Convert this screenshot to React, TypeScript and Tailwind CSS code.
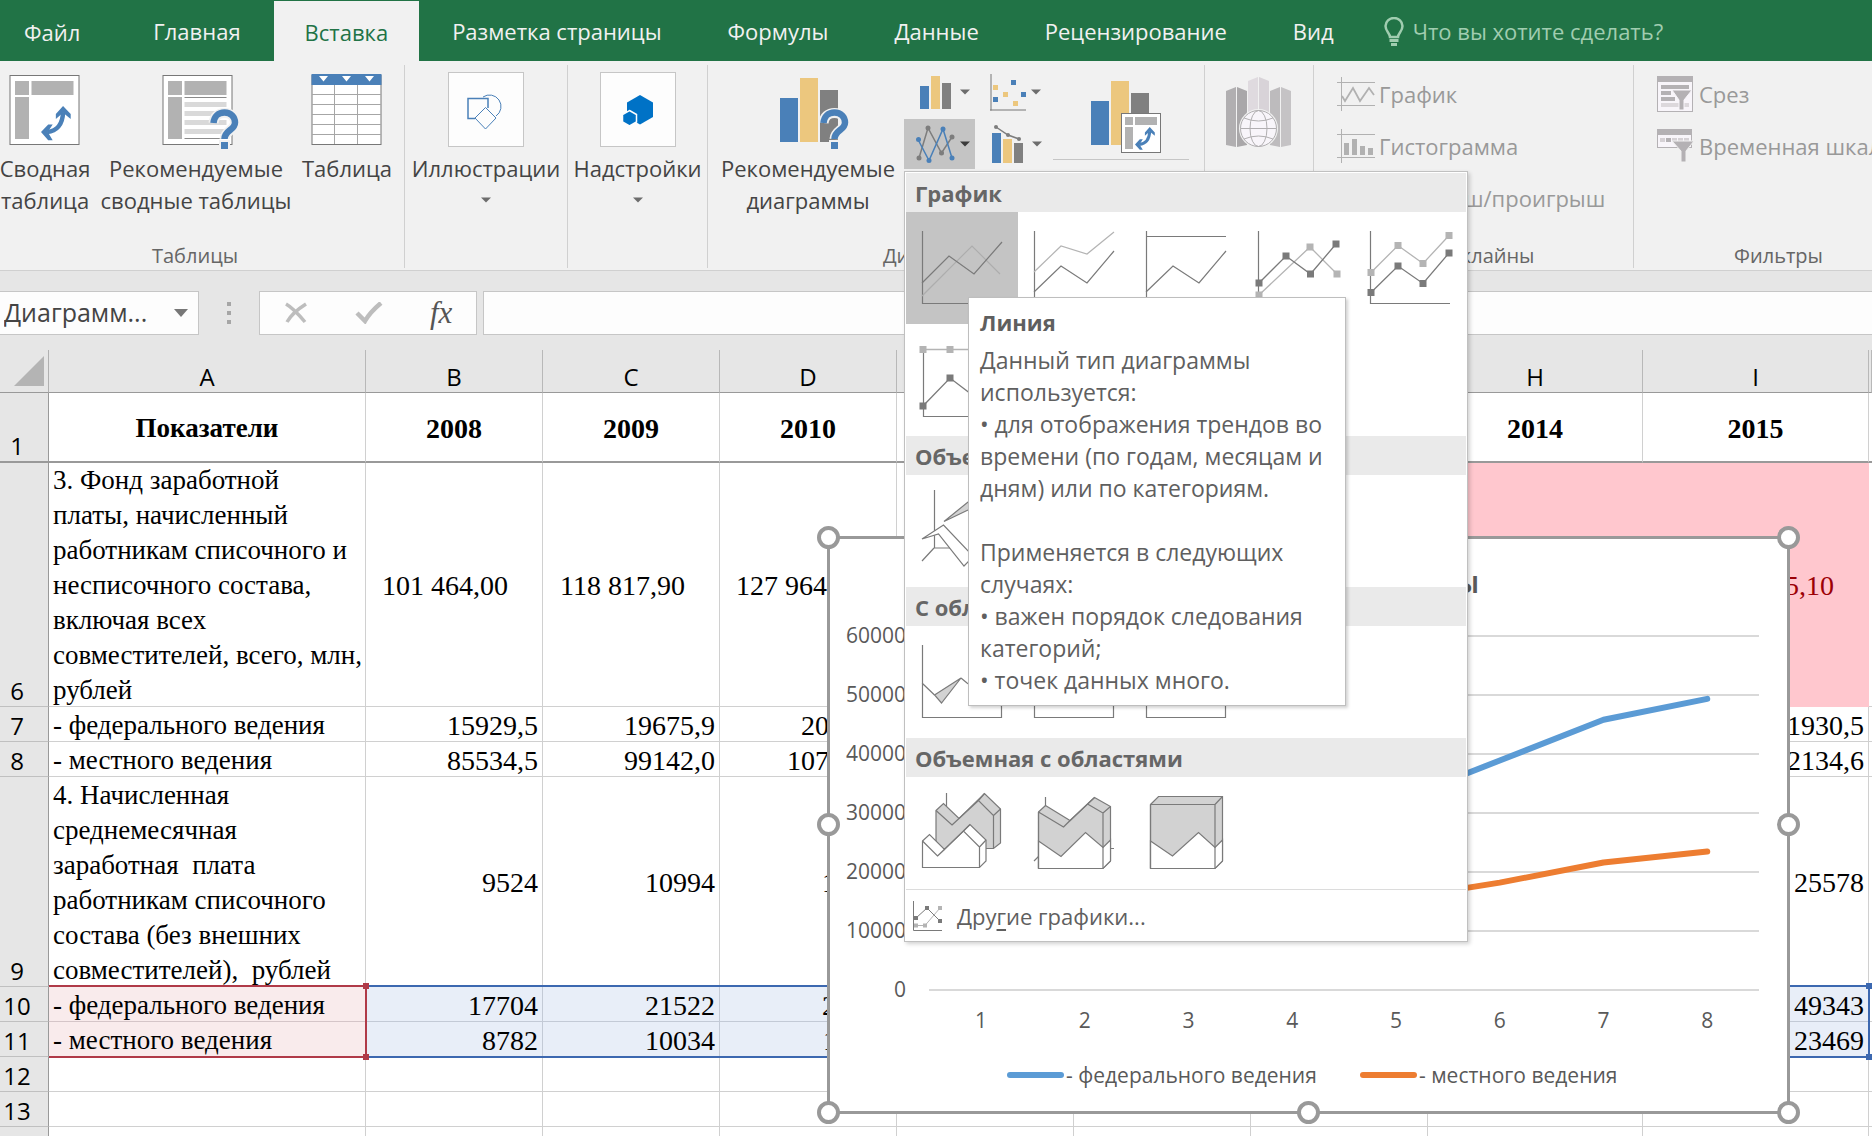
import React from 'react';

const ui = "font-['Open_Sans','Noto_Sans',sans-serif]";

const tabs = ['Главная', 'Вставка', 'Разметка страницы', 'Формулы', 'Данные', 'Рецензирование', 'Вид'];

function Caret({ dark = false }: { dark?: boolean }) {
  return (
    <svg width="10" height="6" viewBox="0 0 10 6" className="shrink-0" aria-hidden="true">
      <path d="M0 0.5H10L5 5.5Z" fill={dark ? '#3b3b3b' : '#6d6d6d'} />
    </svg>
  );
}

function SwapArrows({ x, y, s = 1 }: { x: number; y: number; s?: number }) {
  return (
    <g transform={`translate(${x} ${y}) scale(${s})`}>
      <path d="M7 29C17 28 24 21 24.500 7" fill="none" stroke="#4a80b8" strokeWidth="5" />
      <path d="M24.500 0L33 9V14.500L24.500 7.500L16.500 14.500V9Z" fill="#4a80b8" />
      <path d="M0 29L8 20.500H13L7.500 29L13 38H8Z" fill="#4a80b8" />
    </g>
  );
}

function Question({ x, y }: { x: number; y: number }) {
  return (
    <g transform={`translate(${x} ${y})`}>
      <path d="M3.500 14C4 7.500 8.500 4 14.500 4C21 4 25 8 25 13.500C25 21.500 15 21 14.500 30" fill="none" stroke="#f1f1f1" strokeWidth="10" />
      <rect x="9" y="31" width="11" height="10" fill="#f1f1f1" />
      <path d="M3.500 14C4 7.500 8.500 3.500 14.500 3.500C21 3.500 25 8 25 13.500C25 21.500 14.500 21 14.500 30" fill="none" stroke="#4a80b8" strokeWidth="6.500" />
      <rect x="11" y="33" width="7" height="7" fill="#4a80b8" />
    </g>
  );
}

function PivotIcon() {
  return (
    <svg width="72" height="78" viewBox="0 0 72 78" aria-hidden="true">
      <rect x="1" y="2.500" width="69" height="69" fill="#fff" stroke="#777" />
      <path d="M6 8H20V22H6ZM22.500 8H64.500V22H22.500ZM6 24H20V66H6Z" fill="#b2b2b2" />
      <SwapArrows x={32} y={33} s={0.9} />
    </svg>
  );
}

function RecommendedPivotIcon() {
  return (
    <svg width="78" height="78" viewBox="0 0 78 78" className="ml-2.5" aria-hidden="true">
      <rect x="1" y="2.500" width="69" height="69" fill="#fff" stroke="#777" />
      <path d="M6 8H20V22H6ZM22.500 8H64.500V22H22.500ZM6 24H20V66H6Z" fill="#b2b2b2" />
      <path d="M22.500 29H64.500V34H22.500ZM22.500 38H64.500V43H22.500ZM22.500 47H64.500V52H22.500ZM22.500 56H64.500V61H22.500Z" fill="#d9d9d9" />
      <path d="M22.500 24.500H64.500M22.500 65.500H64.500" stroke="#8a8a8a" />
      <Question x={48} y={36} />
    </svg>
  );
}

function TableIcon() {
  return (
    <svg width="72" height="78" viewBox="0 0 72 78" aria-hidden="true">
      <rect x="1" y="2.500" width="69" height="69" fill="#fff" stroke="#777" />
      <rect x="0.500" y="1" width="70" height="11" fill="#4a80b8" />
      <path d="M8 3H17L12.500 8.500ZM31 3H40L35.500 8.500ZM54 3H63L58.500 8.500Z" fill="#fff" />
      <path d="M1 21.500H70M1 31.500H70M1 41.500H70M1 51.500H70M1 61.500H70M23.500 12V71M46.500 12V71" stroke="#a6a6a6" />
    </svg>
  );
}

function ShapesIcon() {
  return (
    <svg width="38" height="38" viewBox="0 0 38 38" fill="none" stroke="#4a80b8" aria-hidden="true">
      <path d="M8 27.500H1V7.500H21V17" strokeWidth="1.500" />
      <path d="M16 6A11.500 11.500 0 1 1 29 25" />
      <path d="M18.500 16.500L29 27L18.500 38L8 27Z" />
    </svg>
  );
}

function AddinsIcon() {
  return (
    <svg width="32" height="32" viewBox="0 0 32 32" aria-hidden="true">
      <path d="M18 1L31 8.500V23L18 30.500L5 23V8.500Z" fill="#0072c6" />
      <path d="M7.500 16.500L14.500 20.500V28L7.500 32L0.500 28V20.500Z" fill="#0072c6" stroke="#fdfdfd" strokeWidth="1.500" />
    </svg>
  );
}

function RecommendedChartIcon() {
  return (
    <svg width="74" height="78" viewBox="0 0 74 78" className="ml-4" aria-hidden="true">
      <path d="M1 25H19V69H1Z" fill="#4a80b8" />
      <path d="M21 5H39V69H21Z" fill="#ecc77e" />
      <path d="M41 17H59V69H41Z" fill="#808080" />
      <Question x={41} y={36} />
    </svg>
  );
}

function ColumnIcon() {
  return (
    <svg width="32" height="36" viewBox="0 0 32 36" aria-hidden="true">
      <path d="M0 12H9V35H0Z" fill="#4a80b8" />
      <path d="M11 2H20V35H11Z" fill="#ecc77e" />
      <path d="M22 9H31V35H22Z" fill="#808080" />
    </svg>
  );
}

function ScatterIcon() {
  return (
    <svg width="37" height="37" viewBox="0 0 37 37" aria-hidden="true">
      <path d="M1 0V36.500M0 36H36" stroke="#777" fill="none" />
      <path d="M21 6H26V11H21ZM31 18H36V23H31ZM3 23H8V28H3Z" fill="#4a80b8" />
      <path d="M3 11H8V16H3ZM13 18H18V23H13ZM23 27H28V32H23Z" fill="#ecc77e" />
    </svg>
  );
}

function LineIcon() {
  return (
    <svg width="40" height="40" viewBox="0 0 40 40" fill="none" aria-hidden="true">
      <path d="M3 34L12 4L25.500 29L36 13" stroke="#7d7d7d" strokeWidth="1.500" />
      <path d="M2 15.500L13 36.500L27 5L36 34" stroke="#4a80b8" strokeWidth="1.500" />
      <g fill="#7d7d7d"><circle cx="3" cy="34" r="2.500" /><circle cx="12" cy="4" r="2.500" /><circle cx="25.500" cy="29" r="2.500" /><circle cx="36" cy="13" r="2.500" /></g>
      <g fill="#4a80b8"><circle cx="2.500" cy="15.500" r="2.500" /><circle cx="13" cy="36.500" r="2.500" /><circle cx="27" cy="5" r="2.500" /><circle cx="36" cy="34" r="2.500" /></g>
    </svg>
  );
}

function ComboIcon() {
  return (
    <svg width="32" height="40" viewBox="0 0 32 40" aria-hidden="true">
      <path d="M0 9H9V39H0Z" fill="#4a80b8" />
      <path d="M11 15H20V39H11Z" fill="#ecc77e" />
      <path d="M22 19H31V39H22Z" fill="#808080" />
      <path d="M4 3L16 11L27 15" stroke="#7d7d7d" fill="none" strokeWidth="1.500" />
      <g fill="#7d7d7d"><circle cx="4" cy="3" r="2" /><circle cx="16" cy="11" r="2" /><circle cx="27" cy="15" r="2" /></g>
    </svg>
  );
}

function PivotChartIcon() {
  return (
    <svg width="72" height="74" viewBox="0 0 72 74" aria-hidden="true">
      <path d="M0 20H18V64H0Z" fill="#4a80b8" />
      <path d="M20 0H38V64H20Z" fill="#ecc77e" />
      <path d="M40 12H58V50H40Z" fill="#808080" />
      <rect x="30.500" y="32.500" width="39" height="39" fill="#fff" stroke="#777" />
      <path d="M34 36H42V44H34ZM44 36H66V44H44ZM34 46H42V68H34Z" fill="#b2b2b2" />
      <SwapArrows x={44} y={46} s={0.6} />
    </svg>
  );
}

function MapIcon() {
  return (
    <svg width="68" height="74" viewBox="0 0 68 74" aria-hidden="true">
      <path d="M1 14L11 10V70L1 68Z" fill="#b1afb1" />
      <path d="M12 10L22 14V68L12 70Z" fill="#a9a7a9" />
      <path d="M23 4L33 0V40H23Z" fill="#dfdadf" />
      <path d="M34 0L44 4V40H34Z" fill="#d8d3d8" />
      <path d="M45 14L55 10V70L45 68Z" fill="#bdbbbd" />
      <path d="M56 10L66 14V68L56 70Z" fill="#c5c3c5" />
      <circle cx="33.500" cy="51.500" r="19.500" fill="#f1f1f1" />
      <g fill="none" stroke="#b1afb1">
        <circle cx="33.500" cy="51.500" r="18" fill="#f8f5fa" />
        <ellipse cx="33.500" cy="51.500" rx="8.500" ry="18" />
        <path d="M15.500 51.500H51.500M19 41Q33.500 47 48 41M19 62Q33.500 56 48 62" />
      </g>
    </svg>
  );
}

function SparkLineIcon() {
  return (
    <svg width="38" height="34" viewBox="0 0 38 34" fill="none" stroke="#b1b1b1" aria-hidden="true">
      <path d="M4.500 0V34M0 5.500H38M0 28.500H38" />
      <path d="M5 19L8 24L16 11L23 24L32 11L37 18" strokeWidth="1.800" />
    </svg>
  );
}

function SparkColumnIcon() {
  return (
    <svg width="38" height="34" viewBox="0 0 38 34" fill="none" stroke="#b1b1b1" aria-hidden="true">
      <path d="M4.500 0V34M0 5.500H38M0 28.500H38" />
      <path d="M7 14H12V26H7ZM15 10H20V26H15ZM23 17H28V26H23ZM31 19H36V26H31Z" fill="#b1b1b1" stroke="none" />
    </svg>
  );
}

function SlicerIcon() {
  return (
    <svg width="36" height="37" viewBox="0 0 36 37" aria-hidden="true">
      <rect x="0.500" y="0.500" width="35" height="35" fill="#f8f5fa" stroke="#b4b1b4" />
      <path d="M0 0H36V6H0ZM4 9H32V13H4ZM4 15H14V19H4ZM4 21H18V25H4Z" fill="#b4b1b4" />
      <path d="M4 27H32V31H4Z" fill="#dcd8dc" />
      <path d="M15 14H35L27 24V34H22V24Z" fill="#b4b1b4" stroke="#f8f5fa" />
    </svg>
  );
}

function TimelineIcon() {
  return (
    <svg width="38" height="34" viewBox="0 0 38 34" aria-hidden="true">
      <rect x="0.500" y="0.500" width="34" height="18" fill="#f8f5fa" stroke="#b4b1b4" />
      <path d="M0 0H35V6H0ZM9 9H14V13H9Z" fill="#b4b1b4" />
      <path d="M3 9H8V13H3ZM15 9H20V13H15ZM21 9H26V13H21ZM27 9H32V13H27Z" fill="#d5d1d5" />
      <path d="M15 12H37L29 22V33H24V22Z" fill="#b4b1b4" stroke="#f1f1f1" />
    </svg>
  );
}

function Group({ width, label, labelClass = '', children }: { width: string; label?: string; labelClass?: string; children?: React.ReactNode }) {
  return (
    <section className={`${width} flex h-full shrink-0 flex-col`}>
      <div className="flex min-h-0 flex-1 border-r border-[#d0d0d0]">
        <div className="flex min-w-0 flex-1 flex-col">
          <div className="flex flex-1">{children}</div>
          <div className={`${labelClass} h-6 text-center text-[20px] leading-6 whitespace-nowrap text-[#666]`}>{label}</div>
        </div>
      </div>
    </section>
  );
}

function BigButton({ icon, lines, width }: { icon: React.ReactNode; lines: string[]; width: string }) {
  return (
    <button type="button" className={`${width} flex shrink-0 flex-col items-center`}>
      <span className="flex h-[87px] items-start justify-center pt-2">{icon}</span>
      {lines.map((line) => (
        <span key={line} className="block text-[22px] leading-8 whitespace-nowrap text-[#444]">{line}</span>
      ))}
    </button>
  );
}

function BoxButton({ icon, label, width }: { icon: React.ReactNode; label: string; width: string }) {
  return (
    <button type="button" className={`${width} flex shrink-0 flex-col items-center`}>
      <span className="mt-[7px] mb-[5px] flex h-[75px] w-[76px] items-center justify-center border border-[#c6c6c6] bg-[#fdfdfd]">{icon}</span>
      <span className="block text-[22px] leading-8 whitespace-nowrap text-[#444]">{label}</span>
      <span className="flex h-8 items-center"><Caret /></span>
    </button>
  );
}

const dark = '#7a7a7a';
const light = '#b4b4b4';

function Marks({ points, color }: { points: number[][]; color: string }) {
  return (
    <g>
      <polyline points={points.map((p) => p.join(',')).join(' ')} fill="none" stroke={color} strokeWidth="1.300" />
      {points.map(([x, y]) => <rect key={x} x={x - 3.5} y={y - 3.5} width="7" height="7" fill={color} stroke="none" />)}
    </g>
  );
}

function Tile({ label, selected = false, children }: { label: string; selected?: boolean; children: React.ReactNode }) {
  return (
    <button type="button" aria-label={label} className={selected ? 'block size-28 bg-[#c4c4c4]' : 'block size-28'}>
      <svg width="112" height="112" viewBox="0 0 112 112" fill="none" stroke={dark} strokeWidth="1.200">{children}</svg>
    </button>
  );
}

function MenuHeading({ children }: { children: React.ReactNode }) {
  return <h3 className="h-[39px] bg-[#eaeaea] px-[9px] text-[22px] leading-10 font-bold text-[#666]">{children}</h3>;
}

const frontFill = '#fff';
const backFill = '#d2d2d2';

function ChartMenu() {
  return (
    <div className="absolute top-full left-0 z-30 mt-0.5 w-[564px] border border-[#c0c0c0] bg-white p-px shadow-[2px_2px_4px_rgba(0,0,0,0.18)]">
      <MenuHeading>График</MenuHeading>
      <div className="relative">
        <div className="flex flex-wrap">
          <Tile label="Линия" selected>
            <path d="M16.500 19V91.500H96" />
            <path d="M16 84L66 34L94 62" stroke="#adadad" />
            <path d="M16 71L43 44L68 62L96 30" />
          </Tile>
          <Tile label="График с накоплением">
            <path d="M16.500 19V91.500H96" />
            <path d="M16 60L43 34L69 42L96 20" stroke={light} />
            <path d="M16 80L43 54L69 71L96 39" />
          </Tile>
          <Tile label="Нормированный график">
            <path d="M16.500 19V91.500H96M16 24.500H96" />
            <path d="M16 80L43 54L69 71L96 39" />
          </Tile>
          <Tile label="График с маркерами">
            <path d="M16.500 19V91.500H96" />
            <Marks color={light} points={[[17, 83], [68, 35], [95, 62]]} />
            <Marks color={dark} points={[[17, 71], [44, 44], [68.5, 62], [94, 32]]} />
          </Tile>
          <Tile label="График с маркерами и накоплением">
            <path d="M16.500 19V91.500H96" />
            <Marks color={light} points={[[17, 60.500], [44, 33.500], [69, 51.500], [95, 23.500]]} />
            <Marks color={dark} points={[[17, 80.500], [44, 54], [69, 71.500], [95, 41]]} />
          </Tile>
          <Tile label="Нормированный график с маркерами">
            <path d="M17.500 22V92.500H96" />
            <Marks color={light} points={[[17, 25.500], [44, 25.500], [69, 25.500], [95, 25.500]]} />
            <Marks color={dark} points={[[17, 82], [44, 54], [69, 73], [95, 42]]} />
          </Tile>
        </div>
        <div role="tooltip" className="absolute top-[85px] left-[62px] z-10 w-[378px] border border-[#bebebe] bg-white px-[11px] pt-2 pb-[9px] text-[23px] leading-8 text-[#5f5f5f] shadow-[2px_2px_3px_rgba(0,0,0,0.18)]">
          <strong className="mb-1.5 block text-[22px] leading-8 font-bold">Линия</strong>
          <p>Данный тип диаграммы<br />используется:</p>
          <p className="whitespace-nowrap">• для отображения трендов во<br />времени (по годам, месяцам и<br />дням) или по категориям.</p>
          <p className="mt-8">Применяется в следующих<br />случаях:</p>
          <p>• важен порядок следования<br />категорий;</p>
          <p>• точек данных много.</p>
        </div>
      </div>
      <MenuHeading>Объемный график</MenuHeading>
      <div className="flex">
        <Tile label="Объемный график">
          <path d="M28.500 15V73H44M28 73L16 86" />
          <path d="M38 46.500L62 27L90 20L62 35Z" fill={backFill} />
          <path d="M16 64L37.500 50L66 80L62 87L58 91L32.500 59Z" fill="#fff" />
        </Tile>
      </div>
      <MenuHeading>С областями</MenuHeading>
      <div className="flex">
        <Tile label="С областями">
          <path d="M28.500 69L55 52L35.500 77Z" fill={backFill} />
          <path d="M16.500 19V91.500H95.500V80L61 57L55 52M16 57L28.500 69" />
        </Tile>
        <Tile label="С областями и накоплением">
          <path d="M16.500 19V91.500H95.500V80L60 40L16 60" />
        </Tile>
        <Tile label="Нормированная с областями">
          <path d="M16.500 19V91.500H95.500V80L60 40L16 60" />
        </Tile>
      </div>
      <MenuHeading>Объемная с областями</MenuHeading>
      <div className="flex">
        <Tile label="Объемная с областями">
          <path d="M40.500 16V30" />
          <path d="M30 33.500L37.500 26.500L53 41.500L78.500 16.500L94.500 32V66L87.500 71.500H30Z" fill={backFill} />
          <path d="M30 33.500L46 48L72.500 23.500L87.500 38.500V71M46 48L53 41.500M72.500 23.500L78.500 16.500M87.500 38.500L94.500 32" />
          <path d="M16.500 64L23.500 57.500L38.500 72.500L64 47.500L80 63V84L73.500 90.500H16.500Z" fill={frontFill} />
          <path d="M16.500 64L31.500 79L57.500 54L73.500 70V90M31.500 79L38.500 72.500M57.500 54L64 47.500M73.500 70L80 63" />
        </Tile>
        <Tile label="Объемная с областями и накоплением">
          <path d="M27.500 20V30M16 84L21 79M92 71.500H96" />
          <path d="M20.500 35L27.500 28.500L52 43.500L76.500 20.500L92.500 29.500V84L85 91.500H20.500Z" fill={backFill} />
          <path d="M20.500 64L43 79.500L67.500 55.500L85 70.500L92.500 63V84L85 91.500H20.500Z" fill={frontFill} />
          <path d="M20.500 35L45.500 50L69.500 27L85 36V91M45.500 50L52 43.500M69.500 27L76.500 20.500M85 36L92.500 29.500M20.500 35V91" />
        </Tile>
        <Tile label="Нормированная объемная с областями">
          <path d="M20.500 27.500L28.500 19.500H92.500V84L85 91.500H20.500Z" fill={backFill} />
          <path d="M20.500 64L42.500 79L68.500 55.500L85 70.500L92.500 63V84L85 91.500H20.500Z" fill={frontFill} />
          <path d="M20.500 27.500H85V91M85 27.500L92.500 19.500M20.500 27.500V91" />
        </Tile>
      </div>
      <button type="button" className="flex h-[51px] w-full items-center gap-3.5 border-t border-[#dcdcdc] px-[7px] pt-0.5 text-[22px] text-[#5f5f5f]">
        <svg width="30" height="30" viewBox="0 0 30 30" aria-hidden="true">
          <path d="M0.500 0V29.500H29" stroke={dark} fill="none" />
          <path d="M3 24.500H12L27 7" stroke={light} fill="none" />
          <path d="M3 17L14 7L27 20" stroke={dark} fill="none" />
          <path d="M1 22.500H5V26.500H1ZM10 22.500H14V26.500H10ZM25 5H29V9H25Z" fill={light} />
          <path d="M1 15H5V19H1ZM12 5H16V9H12ZM25 18H29V22H25Z" fill={dark} />
        </svg>
        <span>Дру<u className="underline-offset-4">г</u>ие графики...</span>
      </button>
    </div>
  );
}

function Ribbon() {
  return (
    <div className="flex h-[210px] border-b border-[#d0d0d0] bg-[#f1f1f1] pt-1 pb-0.5">
      <Group width="w-[405px]" label="Таблицы" labelClass="pr-3.5">
        <BigButton width="w-[90px]" icon={<PivotIcon />} lines={['Сводная', 'таблица']} />
        <BigButton width="w-[212px]" icon={<RecommendedPivotIcon />} lines={['Рекомендуемые', 'сводные таблицы']} />
        <BigButton width="w-[90px]" icon={<TableIcon />} lines={['Таблица']} />
      </Group>
      <Group width="w-[163px]">
        <BoxButton width="w-full" icon={<ShapesIcon />} label="Иллюстрации" />
      </Group>
      <Group width="w-[140px]">
        <BoxButton width="w-full" icon={<AddinsIcon />} label="Надстройки" />
      </Group>
      <Group width="w-[497px]" label="Диаграммы" labelClass="pr-8">
        <BigButton width="w-[196px] pl-1" icon={<RecommendedChartIcon />} lines={['Рекомендуемые', 'диаграммы']} />
        <div className="grid h-[106px] grid-cols-[72px_72px] grid-rows-[54px_50px]">
          <button type="button" aria-label="Гистограмма" className="flex items-center gap-2 pl-4"><ColumnIcon /><Caret /></button>
          <button type="button" aria-label="Точечная" className="flex items-center gap-1 pl-3.5"><ScatterIcon /><Caret /></button>
          <div className="relative">
            <button type="button" aria-label="График" aria-expanded="true" className="flex h-[50px] w-[71px] items-center gap-1 bg-[#c4c4c4] pl-3"><LineIcon /><Caret dark /></button>
            <ChartMenu />
          </div>
          <button type="button" aria-label="Комбинированная" className="flex items-center gap-2 pl-4"><ComboIcon /><Caret /></button>
        </div>
        <button type="button" aria-label="Сводная диаграмма" className="ml-[5px] flex h-[95px] w-[136px] justify-center border-b border-[#c6c6c6] pt-4 pl-3"><PivotChartIcon /></button>
      </Group>
      <Group width="w-[109px]">
        <button type="button" aria-label="3D-карта" className="flex w-full justify-center pt-3"><MapIcon /></button>
      </Group>
      <Group width="w-[320px]" label="Спарклайны">
        <div className="flex flex-col pt-[3px] pl-[23px] text-[22px] text-[#999]">
          <button type="button" className="flex h-[52px] items-center gap-1"><SparkLineIcon />График</button>
          <button type="button" className="flex h-[52px] items-center gap-1"><SparkColumnIcon />Гистограмма</button>
          <button type="button" className="flex h-[52px] items-center gap-1 whitespace-nowrap"><SparkColumnIcon />Выигрыш/проигрыш</button>
        </div>
      </Group>
      <Group width="w-[290px]" label="Фильтры">
        <div className="flex flex-col pt-[3px] pl-[23px] text-[22px] whitespace-nowrap text-[#999]">
          <button type="button" className="flex h-[52px] items-center gap-1.5"><SlicerIcon />Срез</button>
          <button type="button" className="flex h-[52px] items-center gap-1"><TimelineIcon />Временная шкала</button>
        </div>
      </Group>
    </div>
  );
}

function FormulaBar() {
  return (
    <div className="flex h-[79px] items-start bg-[#e6e6e6] pt-5 text-[#444]">
      <div className="flex h-11 w-[199px] items-center border border-l-0 border-[#c6c6c6] bg-[#fdfdfd] pr-2.5">
        <input aria-label="Имя" defaultValue="Диаграмм..." className="min-w-0 flex-1 bg-transparent pl-1 text-[25px]" />
        <svg width="14" height="8" viewBox="0 0 14 8" aria-hidden="true"><path d="M0 0H14L7 8Z" fill="#777" /></svg>
      </div>
      <div className="flex h-11 w-[60px] flex-col items-center justify-center gap-[5px]">
        <span className="size-1 bg-[#a6a6a6]" /><span className="size-1 bg-[#a6a6a6]" /><span className="size-1 bg-[#a6a6a6]" />
      </div>
      <div className="flex h-11 w-[218px] items-center justify-around border border-[#c6c6c6] bg-[#fdfdfd]">
        <button type="button" aria-label="Отмена">
          <svg width="24" height="22" viewBox="0 0 24 22"><path d="M2 2C9 6 16 14 21 20M22 2C14 7 7 13 3 20" stroke="#bdbdbd" strokeWidth="3.500" fill="none" /></svg>
        </button>
        <button type="button" aria-label="Ввод">
          <svg width="28" height="22" viewBox="0 0 28 22"><path d="M2 11L10 19C14 12 20 6 26 1" stroke="#bdbdbd" strokeWidth="4.500" fill="none" /></svg>
        </button>
        <button type="button" aria-label="Вставить функцию" className="font-['Liberation_Serif',serif] text-[31px] leading-8 text-[#555] italic">fx</button>
      </div>
      <input aria-label="Строка формул" className="ml-1.5 h-11 min-w-0 flex-1 border border-r-0 border-[#c6c6c6] bg-[#fdfdfd]" />
    </div>
  );
}

type Row = { n: number; height: string; label: string; values: string[]; kind: 'head' | 'total' | 'plain' | 'range' };

const rows: Row[] = [
  { n: 1, height: 'h-[70px]', kind: 'head', label: 'Показатели', values: ['2008', '2009', '2010', '2011', '2012', '2013', '2014', '2015'] },
  { n: 6, height: 'h-[244px]', kind: 'total', label: '3. Фонд заработной\nплаты, начисленный\nработникам списочного и\nнесписочного состава,\nвключая всех\nсовместителей, всего, млн,\nрублей', values: ['101 464,00', '118 817,90', '127 964,30', '', '', '', '', '214 065,10'] },
  { n: 7, height: 'h-[35px]', kind: 'plain', label: '- федерального ведения', values: ['15929,5', '19675,9', '20941,8', '', '', '', '', '41930,5'] },
  { n: 8, height: 'h-[35px]', kind: 'plain', label: '- местного ведения', values: ['85534,5', '99142,0', '107022,5', '', '', '', '', '172134,6'] },
  { n: 9, height: 'h-[210px]', kind: 'plain', label: '4. Начисленная\nсреднемесячная\nзаработная  плата\nработникам списочного\nсостава (без внешних\nсовместителей),  рублей', values: ['9524', '10994', '12121', '', '', '', '', '25578'] },
  { n: 10, height: 'h-[35px]', kind: 'range', label: '- федерального ведения', values: ['17704', '21522', '24120', '', '', '', '', '49343'] },
  { n: 11, height: 'h-[35px]', kind: 'range', label: '- местного ведения', values: ['8782', '10034', '11214', '', '', '', '', '23469'] },
  { n: 12, height: 'h-[35px]', kind: 'plain', label: '', values: ['', '', '', '', '', '', '', ''] },
  { n: 13, height: 'h-[35px]', kind: 'plain', label: '', values: ['', '', '', '', '', '', '', ''] },
  { n: 14, height: 'h-[35px]', kind: 'plain', label: '', values: ['', '', '', '', '', '', '', ''] },
];

function valueClass(kind: Row['kind'], col: number) {
  if (kind === 'head') return 'border-r border-b-2 border-r-[#d0d0d0] border-b-[#999] text-center font-bold';
  if (kind === 'total') {
    return col > 5
      ? 'bg-[#ffc7ce] border-r border-b border-[#ffc7ce] pr-[34px] text-right text-[#9c0006]'
      : 'border-r border-b border-[#d0d0d0] pr-[34px] text-right';
  }
  if (kind === 'range') return 'border-r border-b border-[#c3cad6] bg-[#e8eef8] pr-1 text-right';
  return 'border-r border-b border-[#d0d0d0] pr-1 text-right';
}

function labelClass(kind: Row['kind']) {
  if (kind === 'head') return 'border-r border-b-2 border-r-[#d0d0d0] border-b-[#999] text-center font-bold';
  if (kind === 'range') return 'border-r border-b border-[#d5c5c8] bg-[#f9ebec] pl-1 text-left font-normal';
  return 'border-r border-b border-[#d0d0d0] pl-1 text-left font-normal';
}

function Sheet() {
  return (
    <table className="w-full table-fixed border-separate border-spacing-0 font-['Liberation_Serif',serif] text-[27px] leading-[35px] text-black">
      <colgroup>
        <col className="w-[49px]" />
        <col className="w-[317px]" />
        <col className="w-[177px]" />
        <col className="w-[177px]" />
        <col className="w-[177px]" />
        <col className="w-[177px]" />
        <col className="w-[177px]" />
        <col className="w-[177px]" />
        <col className="w-[215px]" />
        <col className="w-[226px]" />
        <col />
      </colgroup>
      <thead className="font-['Open_Sans',sans-serif] text-[24px]">
        <tr className="h-[43px] bg-[#e6e6e6]">
          <th className="border-r border-b border-[#b0b0b0] border-b-[#999] p-0">
            <svg width="30" height="30" viewBox="0 0 30 30" className="mr-1 ml-auto" aria-hidden="true"><path d="M30 0V30H0Z" fill="#b4b4b4" /></svg>
          </th>
          {['A', 'B', 'C', 'D', 'E', 'F', 'G', 'H', 'I', ''].map((c) => (
            <th key={c} className="overflow-hidden border-r border-b border-[#b8b8b8] border-b-[#999] p-0 font-normal">
              <div className="-mb-2 pt-0.5">{c}</div>
            </th>
          ))}
        </tr>
      </thead>
      <tbody>
        {rows.map((r) => (
          <tr key={r.n} className={r.height}>
            <th className={`${r.n === 1 ? 'border-b-2 border-b-[#999]' : 'border-b border-b-[#c0c0c0]'} border-r border-r-[#999] bg-[#e6e6e6] p-0 pr-3.5 align-bottom font-['Open_Sans',sans-serif] text-[24px] font-normal`}>
              <div className="-mb-0.5">{r.n}</div>
            </th>
            <th scope="row" className={`${labelClass(r.kind)} overflow-hidden p-0 whitespace-pre`}>
              <div className="-mb-0.5">{r.label}</div>
            </th>
            {r.values.map((v, i) => (
              <td key={i} className={`${valueClass(r.kind, i)} overflow-hidden py-0 pl-0 text-[28px] whitespace-nowrap`}>
                <div className="-mb-0.5">{v}</div>
              </td>
            ))}
            <td className={r.n === 1 ? 'border-b-2 border-b-[#999] p-0' : 'border-b border-b-[#d0d0d0] p-0'} />
          </tr>
        ))}
      </tbody>
    </table>
  );
}

function Handle({ place }: { place: string }) {
  return <span className={`${place} absolute size-[23px] rounded-full border-4 border-[#999] bg-white`} />;
}

const years = [1, 2, 3, 4, 5, 6, 7, 8];
const federal = [17704, 21522, 24500, 28000, 32000, 38900, 45800, 49343];
const local = [8782, 10034, 11400, 13200, 15400, 18200, 21600, 23469];

const px = (i: number) => 151 + i * 103.75;
const py = (v: number) => 451 - v * 0.0059;
const line = (values: number[]) => values.map((v, i) => `${px(i)},${py(v)}`).join(' ');

function ChartObject() {
  return (
    <div className="absolute top-[186px] left-[827px] z-10 h-[578px] w-[963px] border-3 border-[#999] bg-white">
      <svg viewBox="0 0 957 572" className="size-full font-['Open_Sans',sans-serif]" fill="#595959" fontSize="21" role="img" aria-label="Название диаграммы">
        <text x="649" y="54" fontSize="24" fontWeight="700" textAnchor="end">НАЗВАНИЕ ДИАГРАММЫ</text>
        {[0, 10000, 20000, 30000, 40000, 50000, 60000].map((v) => (
          <g key={v}>
            <path d={`M99 ${py(v)}H929`} stroke="#d9d9d9" strokeWidth="2" />
            <text x="76" y={py(v) + 7} textAnchor="end">{v}</text>
          </g>
        ))}
        {years.map((y, i) => (
          <text key={y} x={px(i)} y="489" textAnchor="middle">{y}</text>
        ))}
        <g fill="none" strokeWidth="6" strokeLinecap="round" strokeLinejoin="round">
          <polyline points={line(federal)} stroke="#5b9bd5" />
          <polyline points={line(local)} stroke="#ed7d31" />
          <path d="M180 536H231" stroke="#5b9bd5" />
          <path d="M533 536H584" stroke="#ed7d31" />
        </g>
        <text x="236" y="544">- федерального ведения</text>
        <text x="589" y="544">- местного ведения</text>
      </svg>
      <Handle place="-top-[13px] -left-[13px]" />
      <Handle place="-top-[13px] left-1/2 -ml-3" />
      <Handle place="-top-[13px] -right-[13px]" />
      <Handle place="top-1/2 -mt-3 -left-[13px]" />
      <Handle place="top-1/2 -mt-3 -right-[13px]" />
      <Handle place="-bottom-[13px] -left-[13px]" />
      <Handle place="-bottom-[13px] left-1/2 -ml-3" />
      <Handle place="-bottom-[13px] -right-[13px]" />
    </div>
  );
}

export default function App() {
  return (
    <div className={`${ui} flex h-screen flex-col overflow-hidden bg-white`}>
      <header className="flex h-[61px] shrink-0 items-stretch bg-[#217346] text-[22px] whitespace-nowrap text-[#f1f1f1]">
        <button type="button" className="pt-1 pr-10 pl-6">Файл</button>
        {tabs.map((t) => (
          <button key={t} type="button" className={t === 'Вставка' ? 'mt-px bg-[#f1f1f1] px-[31px] pt-0.5 text-[#217346]' : 'px-[33px] pt-0.5'}>{t}</button>
        ))}
        <label className="ml-4 flex flex-1 items-center gap-2 pt-0.5 text-[#a0cdb0]">
          <svg width="22" height="30" viewBox="0 0 20 30" fill="none" stroke="#a0cdb0" strokeWidth="2.500" aria-hidden="true">
            <path d="M6 20C6 16 1.500 14.500 1.500 9A8.500 8 0 0 1 18.500 9C18.500 14.500 14 16 14 20Z" />
            <path d="M5.500 23.500H14.500M7 27.500H13" strokeWidth="3" />
          </svg>
          <input aria-label="Что вы хотите сделать?" placeholder="Что вы хотите сделать?" className="w-80 bg-transparent placeholder:text-[#a0cdb0]" />
        </label>
      </header>
      <Ribbon />
      <FormulaBar />
      <main className="relative min-h-0 flex-1 overflow-hidden">
        <Sheet />
        <div className="absolute top-[635px] left-[49px] h-[73px] w-[318px] border-y-2 border-r-2 border-[#b03a48]">
          <span className="absolute -top-1 -right-1 size-1.5 bg-[#b03a48]" />
          <span className="absolute -right-1 -bottom-1 size-1.5 bg-[#b03a48]" />
        </div>
        <div className="absolute top-[635px] left-[369px] h-[73px] w-[1501px] border-y-2 border-r-2 border-[#3c68b0]">
          <span className="absolute -top-1 -right-1 size-1.5 bg-[#3c68b0]" />
          <span className="absolute -right-1 -bottom-1 size-1.5 bg-[#3c68b0]" />
        </div>
        <ChartObject />
      </main>
    </div>
  );
}
